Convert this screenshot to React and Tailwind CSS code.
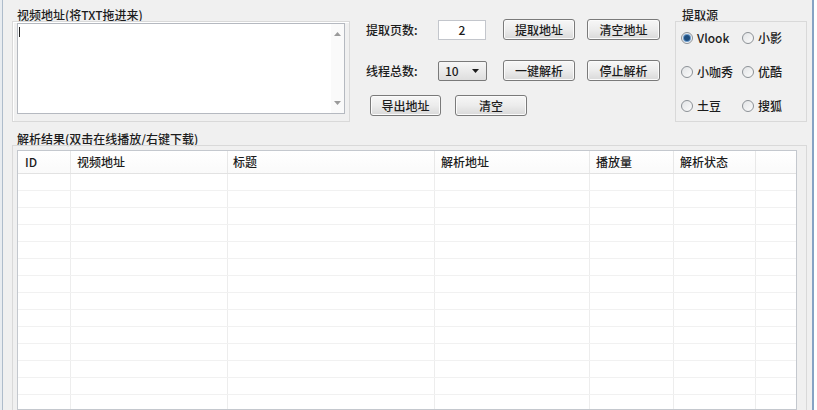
import React from "react";

const cols = [
  { w: "ID", pl: "pl-[7px]" },
  { w: "视频地址", pl: "pl-[6px]" },
  { w: "标题", pl: "pl-[5px]" },
  { w: "解析地址", pl: "pl-[6px]" },
  { w: "播放量", pl: "pl-[6px]" },
  { w: "解析状态", pl: "pl-[6px]" },
  { w: "", pl: "" },
];

function Btn({ children, className = "" }) {
  return (
    <button
      className={`h-[21px] shrink-0 border border-[#7a7a7a] rounded-[3px] bg-linear-to-b from-[#f7f7f7] via-[#ececec] to-[#d9d9d9] shadow-[inset_0_0_0_1px_#fbfbfb] text-[12px] leading-none font-medium text-[#1c1c1c] ${className}`}
    >
      {children}
    </button>
  );
}

function Radio({ label, checked }) {
  return (
    <div className="flex items-center h-[14px]">
      <div className="w-[12px] h-[12px] rounded-full border border-[#8c9196] bg-linear-to-br from-[#e2e4e6] to-[#fbfbfb] flex items-center justify-center">
        {checked && (
          <div className="w-[6px] h-[6px] rounded-full bg-[#1f4f80] shadow-[0_0_0_1px_#6d9ccc]" />
        )}
      </div>
      <span className="ml-[4px] text-[12px] leading-none text-[#1c1c1c]">{label}</span>
    </div>
  );
}

export default function App() {
  return (
    <div className="w-[817px] h-[410px] flex overflow-hidden bg-white font-['Noto_Sans_CJK_SC','Noto_Sans',sans-serif] text-[12px] font-medium text-[#1c1c1c]">
      <div className="w-[3px] bg-[#e8ecf0] border-r border-[#aebccb]" />
      <div className="w-[809px] bg-[#f0f0f0] flex flex-col">
        {/* top area */}
        <div className="flex pt-[8px] h-[122px]">
          {/* 视频地址 group */}
          <div className="ml-[9px] w-[338px] flex flex-col">
            <div className="h-[13px] pl-[5px] leading-[13px]">视频地址(将TXT拖进来)</div>
            <div className="flex-1 border border-[#d9d9d9] pt-[1px] px-[4px] shadow-[inset_1px_1px_0_#ffffff]">
              <div className="h-[91px] border border-[#b5b9c0] bg-white flex">
                <div className="flex-1 pl-[1px] pt-[3px]">
                  <div className="w-[1px] h-[10px] bg-[#222]" />
                </div>
                <div className="w-[13px] flex flex-col items-center justify-between py-[8px] bg-[#fafafa]">
                  <svg width="7" height="4" viewBox="0 0 7 4">
                    <path d="M0 4 L3.5 0 L7 4 Z" fill="#9a9a9a" />
                  </svg>
                  <svg width="7" height="4" viewBox="0 0 7 4">
                    <path d="M0 0 L3.5 4 L7 0 Z" fill="#9a9a9a" />
                  </svg>
                </div>
              </div>
            </div>
          </div>

          {/* middle controls */}
          <div className="ml-[10px] w-[313px] flex flex-col">
            <div className="mt-[11px] h-[21px] flex items-center">
              <span className="w-[78px] pl-[6px]">提取页数:</span>
              <div className="w-[48px] h-[20px] border border-[#c3c6cc] bg-white flex items-center justify-center">2</div>
              <Btn className="ml-[17px] w-[72px]">提取地址</Btn>
              <Btn className="ml-[12px] w-[73px]">清空地址</Btn>
            </div>
            <div className="mt-[20px] h-[21px] flex items-center">
              <span className="w-[78px] pl-[6px]">线程总数:</span>
              <div className="w-[49px] h-[20px] border border-[#7a7a7a] rounded-[2px] bg-linear-to-b from-[#f7f7f7] to-[#dedede] flex items-center justify-between pl-[6px] pr-[7px]">
                <span>10</span>
                <svg width="7" height="4" viewBox="0 0 7 4">
                  <path d="M0 0 L3.5 4 L7 0 Z" fill="#1c1c1c" />
                </svg>
              </div>
              <Btn className="ml-[16px] w-[72px]">一键解析</Btn>
              <Btn className="ml-[12px] w-[73px]">停止解析</Btn>
            </div>
            <div className="mt-[14px] h-[21px] flex items-center pl-[10px]">
              <Btn className="w-[71px]">导出地址</Btn>
              <Btn className="ml-[14px] w-[72px]">清空</Btn>
            </div>
          </div>

          {/* 提取源 group */}
          <div className="ml-[2px] w-[132px] flex flex-col">
            <div className="h-[13px] pl-[7px] leading-[13px]">提取源</div>
            <div className="flex-1 border border-[#d9d9d9] pt-[9px] pl-[5px] flex flex-col gap-[20px]">
              <div className="flex">
                <div className="w-[61px]"><Radio label="Vlook" checked /></div>
                <Radio label="小影" />
              </div>
              <div className="flex">
                <div className="w-[61px]"><Radio label="小咖秀" /></div>
                <Radio label="优酷" />
              </div>
              <div className="flex">
                <div className="w-[61px]"><Radio label="土豆" /></div>
                <Radio label="搜狐" />
              </div>
            </div>
          </div>
        </div>

        {/* results */}
        <div className="mt-[10px] flex flex-col flex-1 min-h-0">
          <div className="h-[13px] pl-[14px] leading-[13px]">解析结果(双击在线播放/右键下载)</div>
          <div className="ml-[9px] w-[795px] flex-1 min-h-0 border-l border-r border-t border-[#d9d9d9] pt-[4px] pl-[4px]">
            <div className="w-[780px] h-full border border-[#c4c8ce] bg-white overflow-hidden">
              <div className="grid grid-cols-[53px_157px_207px_155px_84px_82px_1fr] h-[23px] border-b border-[#e2e2e2] bg-linear-to-b from-white to-[#fafafa]">
                {cols.map((c, i) => (
                  <div
                    key={i}
                    className={`flex items-center ${c.pl} ${i < 6 ? "border-r border-[#e8e8e8]" : ""}`}
                  >
                    {c.w}
                  </div>
                ))}
              </div>
              {Array.from({ length: 14 }).map((_, r) => (
                <div
                  key={r}
                  className="grid grid-cols-[53px_157px_207px_155px_84px_82px_1fr] h-[17px] border-b border-[#f1f1f1]"
                >
                  {cols.map((c, i) => (
                    <div key={i} className={i < 6 ? "border-r border-[#ededed]" : ""} />
                  ))}
                </div>
              ))}
            </div>
          </div>
        </div>
      </div>
      <div className="w-[2px] bg-[#86a3c4]" />
      <div className="flex-1 bg-white" />
    </div>
  );
}
